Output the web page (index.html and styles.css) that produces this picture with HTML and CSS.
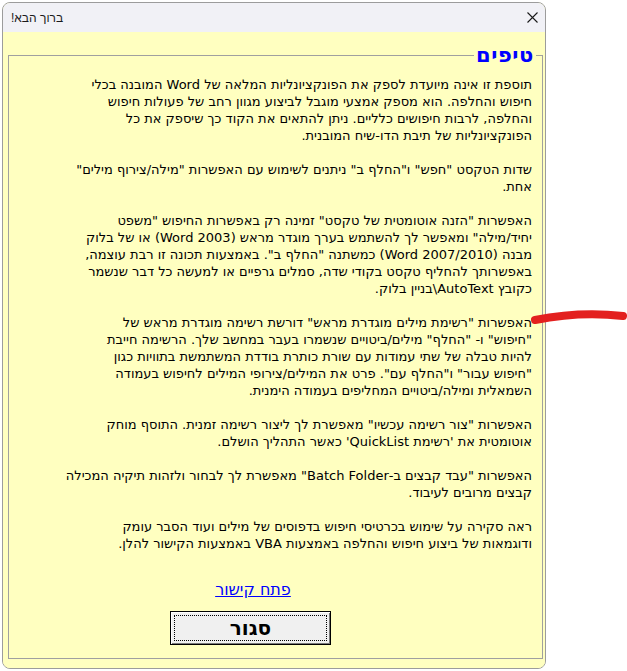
FILE: index.html
```html
<!DOCTYPE html>
<html lang="he">
<head>
<meta charset="utf-8">
<title>ברוך הבא!</title>
<link rel="stylesheet" href="styles.css">
</head>
<body>
<div class="desk">
  <div class="window">
    <div class="titlebar">
      <span class="title" dir="rtl">ברוך הבא!</span>
      <svg class="close" width="11" height="11" viewBox="0 0 11 11"><path d="M0.5 0.5 L10.5 10.5 M10.5 0.5 L0.5 10.5" stroke="#1a1a1a" stroke-width="1.1" fill="none"/></svg>
    </div>
    <div class="client">
      <fieldset class="tips" dir="rtl">
        <legend class="legend">טיפים</legend>
        <div class="text">
          <p>תוספת זו אינה מיועדת לספק את הפונקציונליות המלאה של Word המובנה בכלי<br>חיפוש והחלפה. הוא מספק אמצעי מוגבל לביצוע מגוון רחב של פעולות חיפוש<br>והחלפה, לרבות חיפושים כלליים. ניתן להתאים את הקוד כך שיספק את כל<br>הפונקציונליות של תיבת הדו-שיח המובנית.</p>
          <p>שדות הטקסט "חפש" ו"החלף ב" ניתנים לשימוש עם האפשרות "מילה/צירוף מילים"<br>אחת.</p>
          <p>האפשרות "הזנה אוטומטית של טקסט" זמינה רק באפשרות החיפוש "משפט<br>יחיד/מילה" ומאפשר לך להשתמש בערך מוגדר מראש (Word 2003) או של בלוק<br>מבנה (Word 2007/2010) כמשתנה "החלף ב". באמצעות תכונה זו רבת עוצמה,<br>באפשרותך להחליף טקסט בקודי שדה, סמלים גרפיים או למעשה כל דבר שנשמר<br>כקובץ AutoText\בניין בלוק.</p>
          <p>האפשרות "רשימת מילים מוגדרת מראש" דורשת רשימה מוגדרת מראש של<br>"חיפוש" ו- "החלף" מילים/ביטויים שנשמרו בעבר במחשב שלך. הרשימה חייבת<br>להיות טבלה של שתי עמודות עם שורת כותרת בודדת המשתמשת בתוויות כגון<br>"חיפוש עבור" ו"החלף עם". פרט את המילים/צירופי המילים לחיפוש בעמודה<br>השמאלית ומילה/ביטויים המחליפים בעמודה הימנית.</p>
          <p>האפשרות "צור רשימה עכשיו" מאפשרת לך ליצור רשימה זמנית. התוסף מוחק<br>אוטומטית את 'רשימת QuickList' כאשר התהליך הושלם.</p>
          <p>האפשרות "עבד קבצים ב-Batch Folder" מאפשרת לך לבחור ולזהות תיקיה המכילה<br>קבצים מרובים לעיבוד.</p>
          <p>ראה סקירה על שימוש בכרטיסי חיפוש בדפוסים של מילים ועוד הסבר עומק<br>ודוגמאות של ביצוע חיפוש והחלפה באמצעות VBA באמצעות הקישור להלן.</p>
        </div>
        <div class="footer" dir="ltr">
          <div class="actions">
            <a class="link" href="#" dir="rtl">פתח קישור</a>
            <button class="btn" type="button">סגור</button>
          </div>
        </div>
      </fieldset>
    </div>
  </div>
  <svg class="marker" width="627" height="671" viewBox="0 0 627 671"><path d="M535 320 Q 580 311 623 316" stroke="#e3201f" stroke-width="8" stroke-linecap="round" fill="none"/></svg>
</div>
</body>
</html>
```

FILE: styles.css
```css
html, body {
  margin: 0;
  padding: 0;
  background: #ffffff;
}

.desk {
  position: relative;
  width: 627px;
  height: 671px;
  overflow: hidden;
  background: #ffffff;
}

.window {
  margin: 2px 0 0 2px;
  width: 542px;
  border: 1px solid #9c9c9c;
  border-radius: 8px;
  overflow: hidden;
  display: flex;
  flex-direction: column;
  background: #ffffc0;
}

.titlebar {
  height: 29px;
  background: #f1f1f6;
  display: flex;
  align-items: center;
  justify-content: space-between;
  padding: 0 7px 0 8px;
}

.title {
  font-family: "Liberation Sans", "DejaVu Sans", sans-serif;
  font-size: 12px;
  color: #1a1a1a;
}

.close {
  display: block;
}

.client {
  background: #ffffc0;
  padding: 11px 2px 9px 5px;
}

.tips {
  margin: 0;
  border: 1px solid #a0a0a0;
  padding: 9px 6px 13px 3px;
  min-width: 0;
}

.legend {
  font-family: "DejaVu Sans", sans-serif;
  font-weight: bold;
  font-size: 21px;
  line-height: 24px;
  letter-spacing: 0.6px;
  color: #0000ff;
  padding: 0 2px;
}

.text {
  padding-right: 4px;
  font-family: "DejaVu Sans", sans-serif;
  font-size: 13px;
  line-height: 17px;
  color: #000000;
  white-space: nowrap;
}

.text p {
  margin: 0 0 17px 0;
}

.text p:last-child {
  margin-bottom: 0;
}

.footer {
  padding-top: 29px;
  padding-left: 158px;
}

.actions {
  width: 161px;
  display: flex;
  flex-direction: column;
  align-items: center;
  gap: 12px;
}

.link {
  font-family: "DejaVu Sans", sans-serif;
  font-size: 16px;
  line-height: 18px;
  color: #0000ff;
  text-decoration: underline;
  margin-left: 5px;
}

.btn {
  width: 161px;
  height: 34px;
  margin: 0;
  padding: 0;
  background: #f0f0f0;
  border: 1px solid #000000;
  box-shadow: inset 1px 1px 0 #ffffff, inset -1px -1px 0 #7a7a7a;
  outline: 1px dotted #000000;
  outline-offset: -5px;
  font-family: "DejaVu Sans", sans-serif;
  font-weight: bold;
  font-size: 20px;
  color: #000000;
}

.marker {
  position: absolute;
  left: 0;
  top: 0;
  pointer-events: none;
}
```
